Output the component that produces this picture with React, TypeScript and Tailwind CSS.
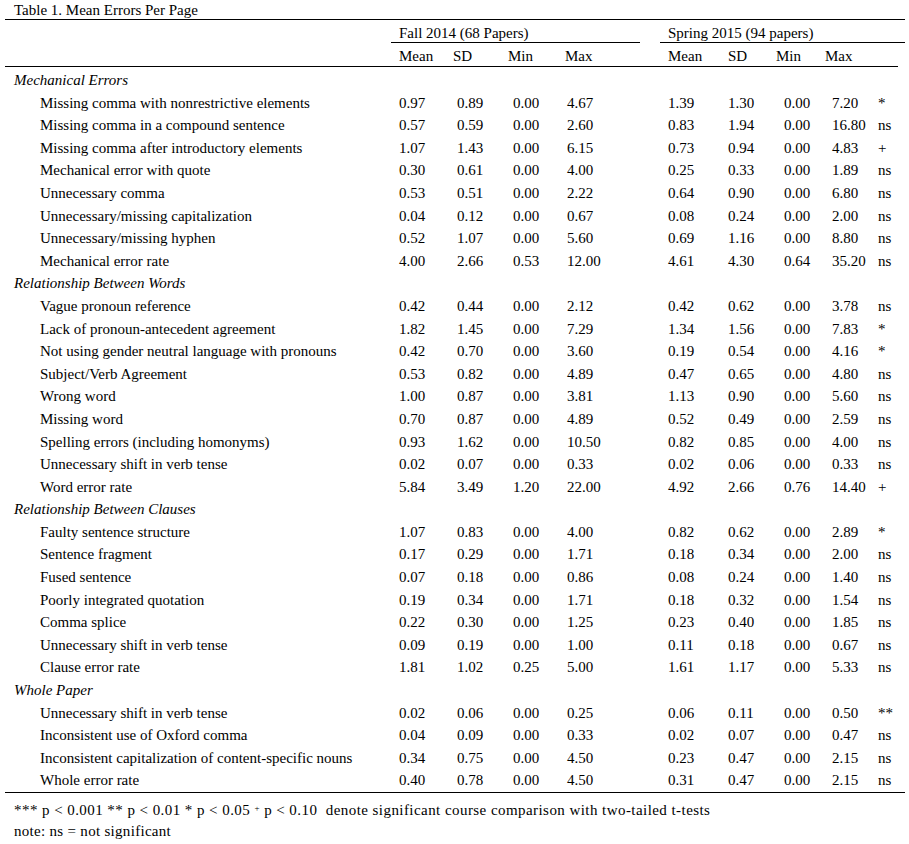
const sections: { title: string; rows: [string, string[], string][] }[] = [
  {
    title: "Mechanical Errors",
    rows: [
      ["Missing comma with nonrestrictive elements", ["0.97", "0.89", "0.00", "4.67", "1.39", "1.30", "0.00", "7.20"], "*"],
      ["Missing comma in a compound sentence", ["0.57", "0.59", "0.00", "2.60", "0.83", "1.94", "0.00", "16.80"], "ns"],
      ["Missing comma after introductory elements", ["1.07", "1.43", "0.00", "6.15", "0.73", "0.94", "0.00", "4.83"], "+"],
      ["Mechanical error with quote", ["0.30", "0.61", "0.00", "4.00", "0.25", "0.33", "0.00", "1.89"], "ns"],
      ["Unnecessary comma", ["0.53", "0.51", "0.00", "2.22", "0.64", "0.90", "0.00", "6.80"], "ns"],
      ["Unnecessary/missing capitalization", ["0.04", "0.12", "0.00", "0.67", "0.08", "0.24", "0.00", "2.00"], "ns"],
      ["Unnecessary/missing hyphen", ["0.52", "1.07", "0.00", "5.60", "0.69", "1.16", "0.00", "8.80"], "ns"],
      ["Mechanical error rate", ["4.00", "2.66", "0.53", "12.00", "4.61", "4.30", "0.64", "35.20"], "ns"],
    ],
  },
  {
    title: "Relationship Between Words",
    rows: [
      ["Vague pronoun reference", ["0.42", "0.44", "0.00", "2.12", "0.42", "0.62", "0.00", "3.78"], "ns"],
      ["Lack of pronoun-antecedent agreement", ["1.82", "1.45", "0.00", "7.29", "1.34", "1.56", "0.00", "7.83"], "*"],
      ["Not using gender neutral language with pronouns", ["0.42", "0.70", "0.00", "3.60", "0.19", "0.54", "0.00", "4.16"], "*"],
      ["Subject/Verb Agreement", ["0.53", "0.82", "0.00", "4.89", "0.47", "0.65", "0.00", "4.80"], "ns"],
      ["Wrong word", ["1.00", "0.87", "0.00", "3.81", "1.13", "0.90", "0.00", "5.60"], "ns"],
      ["Missing word", ["0.70", "0.87", "0.00", "4.89", "0.52", "0.49", "0.00", "2.59"], "ns"],
      ["Spelling errors (including homonyms)", ["0.93", "1.62", "0.00", "10.50", "0.82", "0.85", "0.00", "4.00"], "ns"],
      ["Unnecessary shift in verb tense", ["0.02", "0.07", "0.00", "0.33", "0.02", "0.06", "0.00", "0.33"], "ns"],
      ["Word error rate", ["5.84", "3.49", "1.20", "22.00", "4.92", "2.66", "0.76", "14.40"], "+"],
    ],
  },
  {
    title: "Relationship Between Clauses",
    rows: [
      ["Faulty sentence structure", ["1.07", "0.83", "0.00", "4.00", "0.82", "0.62", "0.00", "2.89"], "*"],
      ["Sentence fragment", ["0.17", "0.29", "0.00", "1.71", "0.18", "0.34", "0.00", "2.00"], "ns"],
      ["Fused sentence", ["0.07", "0.18", "0.00", "0.86", "0.08", "0.24", "0.00", "1.40"], "ns"],
      ["Poorly integrated quotation", ["0.19", "0.34", "0.00", "1.71", "0.18", "0.32", "0.00", "1.54"], "ns"],
      ["Comma splice", ["0.22", "0.30", "0.00", "1.25", "0.23", "0.40", "0.00", "1.85"], "ns"],
      ["Unnecessary shift in verb tense", ["0.09", "0.19", "0.00", "1.00", "0.11", "0.18", "0.00", "0.67"], "ns"],
      ["Clause error rate", ["1.81", "1.02", "0.25", "5.00", "1.61", "1.17", "0.00", "5.33"], "ns"],
    ],
  },
  {
    title: "Whole Paper",
    rows: [
      ["Unnecessary shift in verb tense", ["0.02", "0.06", "0.00", "0.25", "0.06", "0.11", "0.00", "0.50"], "**"],
      ["Inconsistent use of Oxford comma", ["0.04", "0.09", "0.00", "0.33", "0.02", "0.07", "0.00", "0.47"], "ns"],
      ["Inconsistent capitalization of content-specific nouns", ["0.34", "0.75", "0.00", "4.50", "0.23", "0.47", "0.00", "2.15"], "ns"],
      ["Whole error rate", ["0.40", "0.78", "0.00", "4.50", "0.31", "0.47", "0.00", "2.15"], "ns"],
    ],
  },
];

const dataCols =
  "grid grid-cols-[394px_58px_56px_54px_101px_60px_56px_48px_46px_27px]";

export default function App() {
  return (
    <div
      className="min-h-screen bg-white text-black text-[15px]"
      style={{ fontFamily: '"Liberation Serif", "Times New Roman", serif' }}
    >
      <div className="ml-[5px] w-[900px]">
        <div className="h-[20px] border-b border-black pt-[1px] pl-[9px] leading-[18px]">
          Table 1. Mean Errors Per Page
        </div>

        <div className="flex h-[23px]">
          <div className="w-[386px]" />
          <div className="w-[249px] border-b border-black pt-[5px] pl-[8px] leading-[17px]">
            Fall 2014 (68 Papers)
          </div>
          <div className="w-[20px]" />
          <div className="w-[245px] border-b border-black pt-[5px] pl-[8px] leading-[17px]">
            Spring 2015 (94 papers)
          </div>
        </div>

        <div className="grid h-[24px] w-[893px] grid-cols-[394px_54px_55px_57px_103px_60px_48px_49px_1fr] border-b border-black pt-[3px] leading-[20px]">
          <div />
          <div>Mean</div>
          <div>SD</div>
          <div>Min</div>
          <div>Max</div>
          <div>Mean</div>
          <div>SD</div>
          <div>Min</div>
          <div>Max</div>
        </div>

        <div className="border-b border-black pt-[2px]">
          {sections.map((s) => (
            <div key={s.title}>
              <div className="h-[22.6px] pl-[9px] italic leading-[22.6px]">
                {s.title}
              </div>
              {s.rows.map(([label, vals, sig], i) => (
                <div className={`${dataCols} h-[22.6px] leading-[22.6px]`} key={i}>
                  <div className="pl-[35px] whitespace-nowrap">{label}</div>
                  {vals.map((v, j) => (
                    <div key={j}>{v}</div>
                  ))}
                  <div>{sig}</div>
                </div>
              ))}
            </div>
          ))}
        </div>

        <div className="pt-[7px] pl-[9px] leading-[21px]">
          <div className="whitespace-nowrap tracking-[0.44px]">
            *** p &lt; 0.001 ** p &lt; 0.01 * p &lt; 0.05{" "}
            <span className="relative -top-[4px] text-[9px] leading-none">+</span> p &lt; 0.10&nbsp; denote
            significant course comparison with two-tailed t-tests
          </div>
          <div className="tracking-[0.3px]">note: ns = not significant</div>
        </div>
      </div>
    </div>
  );
}
